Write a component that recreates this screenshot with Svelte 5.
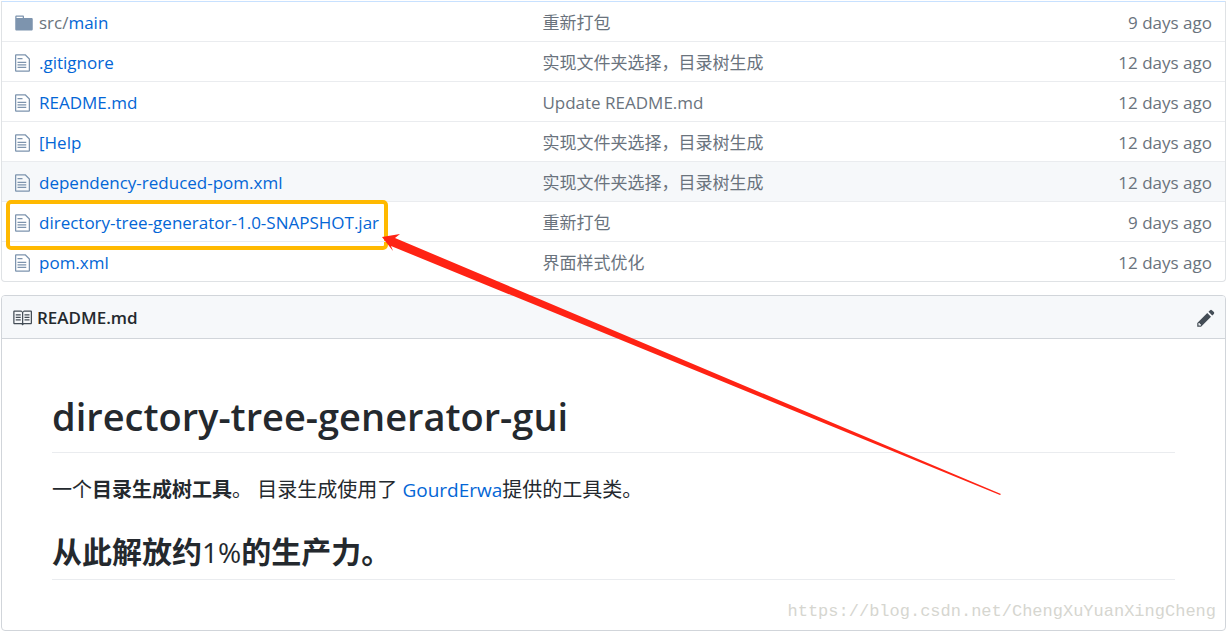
<script>
	const files = [
		{ dir: 'src/', name: 'main', message: '重新打包', age: '9 days ago' },
		{ name: '.gitignore', message: '实现文件夹选择，目录树生成', age: '12 days ago' },
		{ name: 'README.md', message: 'Update README.md', age: '12 days ago' },
		{ name: '[Help', message: '实现文件夹选择，目录树生成', age: '12 days ago' },
		{ name: 'dependency-reduced-pom.xml', message: '实现文件夹选择，目录树生成', age: '12 days ago', active: true },
		{ name: 'directory-tree-generator-1.0-SNAPSHOT.jar', message: '重新打包', age: '9 days ago', marked: true },
		{ name: 'pom.xml', message: '界面样式优化', age: '12 days ago' }
	];
</script>

<main>
	<table class="files">
		<tbody>
			{#each files as file}
				<tr class:active={file.active}>
					<td class="icon">
						{#if file.dir}
							<svg viewBox="0 0 14 16" width="18" height="20" aria-hidden="true">
								<path fill-rule="evenodd" d="M13 4H7V3c0-.66-.31-1-1-1H1c-.55 0-1 .45-1 1v10c0 .55.45 1 1 1h12c.55 0 1-.45 1-1V5c0-.55-.45-1-1-1zM6 4H1V3h5v1z" />
							</svg>
						{:else}
							<svg viewBox="0 0 12 16" width="15" height="20" aria-hidden="true">
								<path fill-rule="evenodd" d="M6 5H2V4h4v1zM2 8h7V7H2v1zm0 2h7V9H2v1zm0 2h7v-1H2v1zm10-7.5V14c0 .55-.45 1-1 1H1c-.55 0-1-.45-1-1V2c0-.55.45-1 1-1h7.500L12 4.500zM11 5L8 2H1v12h10V5z" />
							</svg>
						{/if}
					</td>
					<td class="name">
						<a href="#top">{#if file.dir}<span>{file.dir}</span>{/if}{file.name}</a>
						{#if file.marked}
							<div class="marker"></div>
							<svg class="arrow" viewBox="0 0 620 262" width="620" height="262" aria-hidden="true">
								<path d="M0 3L18 0L13 4L619 260L618 261L9 12L11 17Z" />
							</svg>
						{/if}
					</td>
					<td class="message">{file.message}</td>
					<td class="age">{file.age}</td>
				</tr>
			{/each}
		</tbody>
	</table>

	<section class="readme">
		<header>
			<h3>
				<svg viewBox="0 0 16 16" width="20" height="20" aria-hidden="true">
					<path fill-rule="evenodd" d="M3 5h4v1H3V5zm0 3h4V7H3v1zm0 2h4V9H3v1zm11-5h-4v1h4V5zm0 2h-4v1h4V7zm0 2h-4v1h4V9zm2-6v9c0 .55-.45 1-1 1H9.500l-1 1-1-1H2c-.55 0-1-.45-1-1V3c0-.55.45-1 1-1h5.500l1 1 1-1H15c.55 0 1 .45 1 1zm-8 .5L7.500 3H2v9h6V3.500zm7-.5H9.500l-.5.5V12h6V3z" />
				</svg>
				README.md
			</h3>
			<button aria-label="Edit this file">
				<svg viewBox="0 0 14 16" width="18" height="20" aria-hidden="true">
					<path fill-rule="evenodd" d="M0 12v3h3l8-8-3-3-8 8zm3 2H1v-2h1v1h1v1zm10.300-9.300L12 6 9 3l1.300-1.300a.996.996 0 0 1 1.410 0l1.590 1.590c.39.39.39 1.020 0 1.410z" />
				</svg>
			</button>
		</header>
		<article>
			<h1>directory-tree-generator-gui</h1>
			<p>一个<strong>目录生成树工具</strong>。 目录生成使用了 <a href="#top">GourdErwa</a>提供的工具类。</p>
			<h2>从此解放约<span>1%</span>的生产力。</h2>
		</article>
		<div class="watermark">https://blog.csdn.net/ChengXuYuanXingCheng</div>
	</section>
</main>

<style>
	:global(body) {
		margin: 0;
		background: #fff;
	}

	main {
		padding: 1px 1px 0;
		font-family: 'Open Sans', 'Noto Sans CJK SC', sans-serif;
		font-size: 17px;
		line-height: 24px;
		color: #24292e;
	}

	a {
		color: #0366d6;
		text-decoration: none;
	}

	.files {
		width: 100%;
		border: 1px solid #dfe2e5;
		border-top: 0;
		border-radius: 0 0 4px 4px;
		border-spacing: 0;
		table-layout: fixed;
	}

	td {
		box-sizing: border-box;
		height: 40px;
		padding: 2px 0 0;
		border-top: 1px solid #eaecef;
		white-space: nowrap;
	}

	tr:first-child td {
		border-top-color: #c8e1ff;
	}

	.active {
		background: #f6f8fa;
	}

	.icon {
		width: 37px;
		padding-left: 13px;
	}

	.icon svg {
		display: block;
		fill: #7d94ae;
	}

	.name {
		position: relative;
		width: 41%;
	}

	.name span {
		color: #6a737d;
	}

	.message,
	.age {
		color: #6a737d;
	}

	.message {
		padding-left: 2px;
	}

	.age {
		width: 140px;
		padding-right: 13px;
		text-align: right;
	}

	.marker {
		position: absolute;
		top: -2px;
		left: -33px;
		box-sizing: border-box;
		width: 382px;
		height: 50px;
		border: 4px solid #ffb900;
		border-radius: 5px;
		pointer-events: none;
	}

	.arrow {
		position: absolute;
		top: 32px;
		left: 343px;
		z-index: 1;
		fill: #ff2314;
		pointer-events: none;
	}

	.readme {
		position: relative;
		margin-top: 13px;
		border: 1px solid #d1d5da;
		border-radius: 4px;
	}

	header {
		display: flex;
		align-items: center;
		justify-content: space-between;
		height: 40px;
		padding: 2px 10px 0;
		border-bottom: 1px solid #d1d5da;
		border-radius: 3px 3px 0 0;
		background: #f6f8fa;
	}

	h3 {
		display: flex;
		align-items: center;
		gap: 5px;
		margin: 0;
		font-size: 17px;
		font-weight: 600;
	}

	header svg {
		display: block;
		fill: #444d56;
	}

	button {
		padding: 0;
		border: 0;
		background: none;
	}

	article {
		padding: 52px 50px 50px;
	}

	h1,
	h2 {
		margin: 0;
		border-bottom: 1px solid #eaecef;
		font-weight: 600;
	}

	h1 {
		padding-bottom: 11px;
		font-size: 38px;
		line-height: 50px;
	}

	p {
		margin: 22px 0 28px;
		font-size: 20px;
		line-height: 30px;
	}

	p a {
		font-size: 19px;
	}

	h2 {
		padding-bottom: 8px;
		font-size: 30px;
		line-height: 38px;
	}

	h2,
	strong {
		font-weight: 700;
	}

	h2 span {
		font-size: 28px;
		font-weight: 400;
	}

	.watermark {
		position: absolute;
		right: 9px;
		bottom: 6px;
		font-family: 'Liberation Mono', monospace;
		font-size: 17px;
		color: #d6d6d0;
	}
</style>
